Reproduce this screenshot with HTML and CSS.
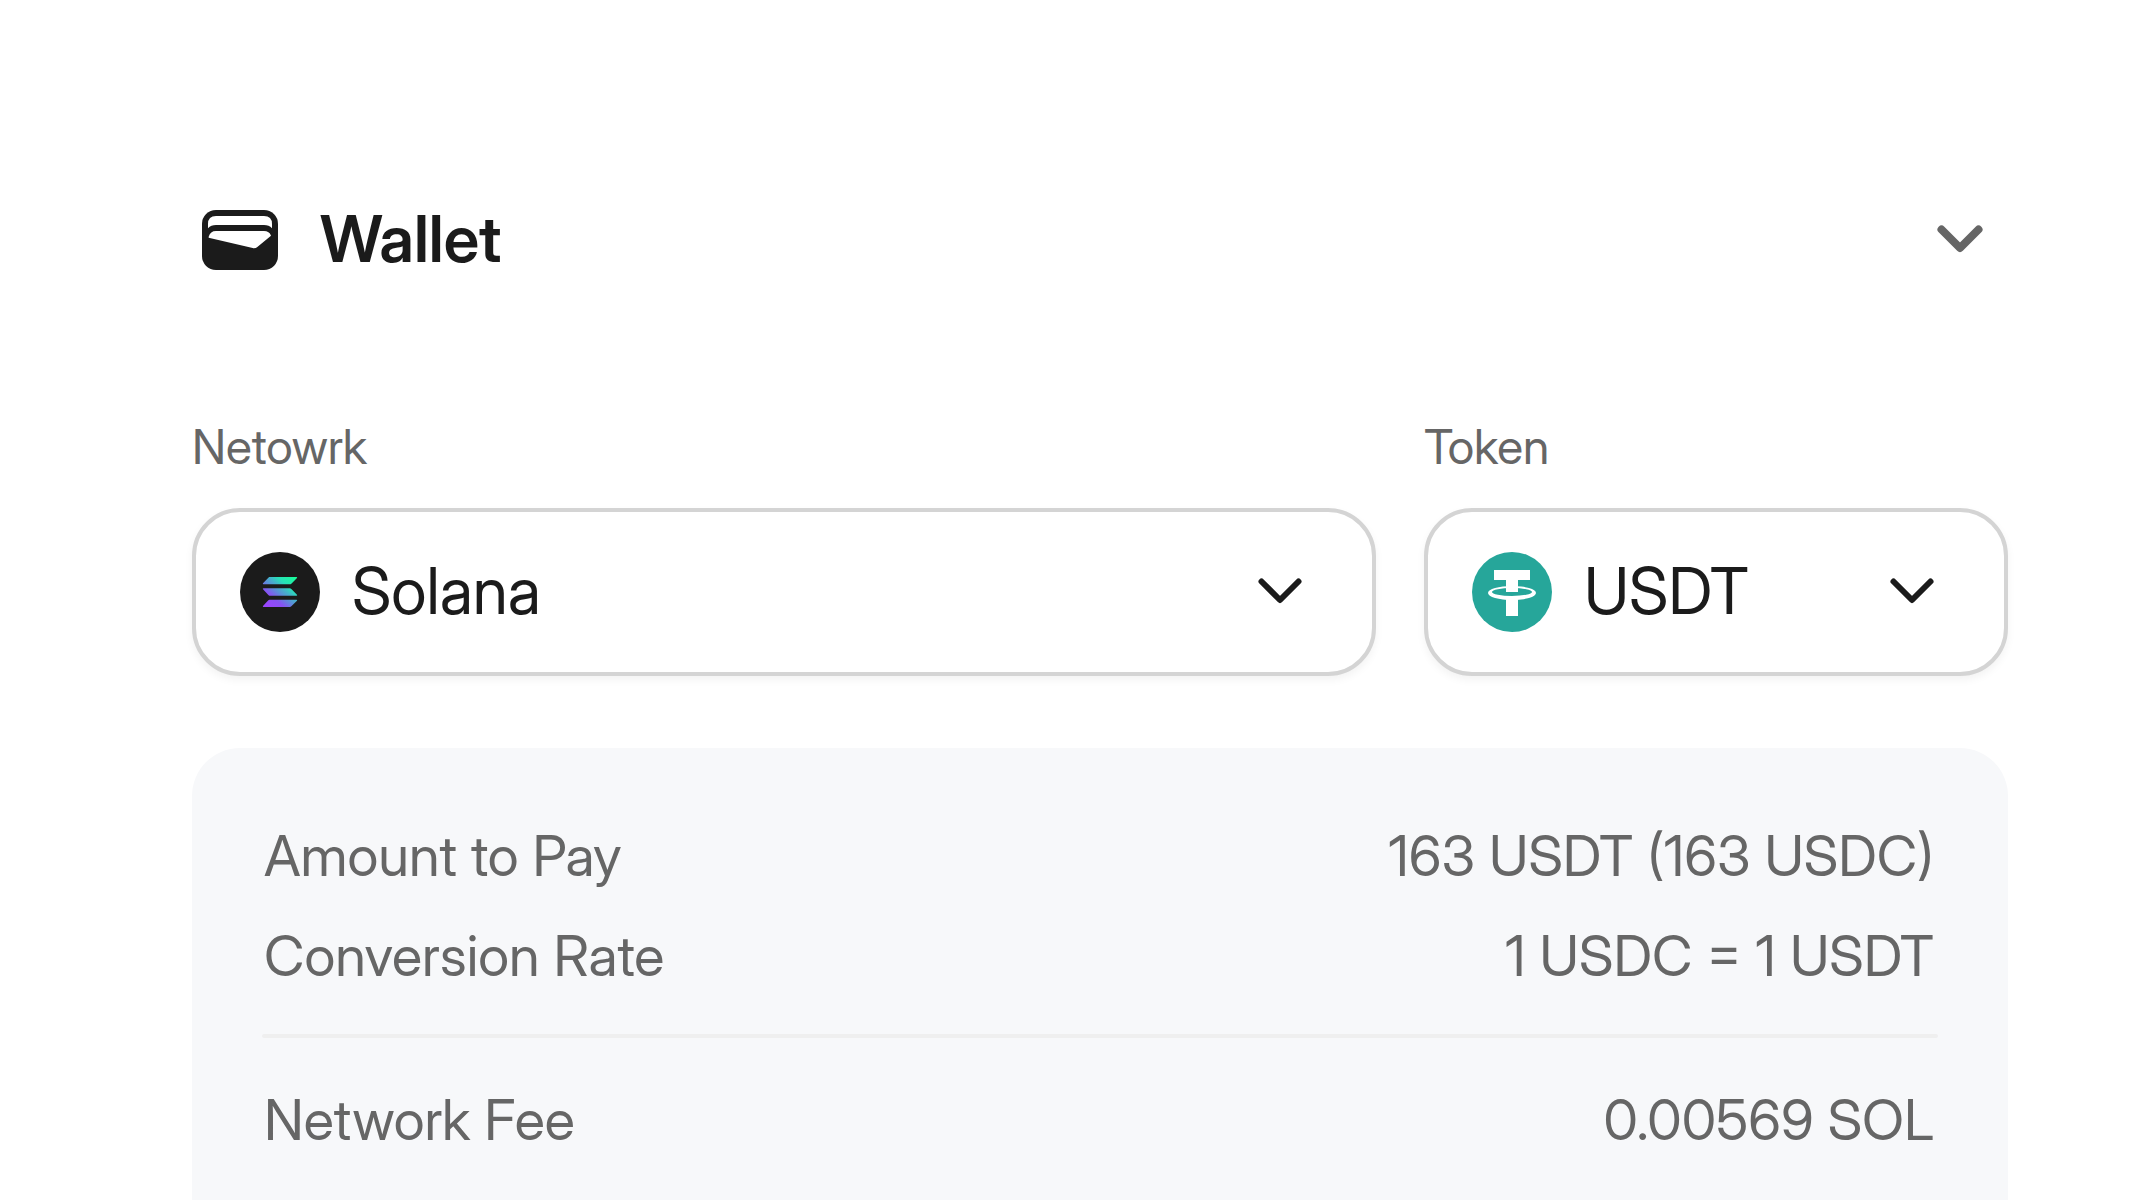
FILE: index.html
```html
<!DOCTYPE html>
<html lang="en">
<head>
<meta charset="utf-8">
<meta name="viewport" content="width=device-width, initial-scale=1">
<title>Wallet</title>
<link rel="stylesheet" href="styles.css">
</head>
<body>
<main class="wallet">
  <button class="wallet-header" type="button" aria-expanded="true">
    <span class="icon-box">
      <svg class="wallet-icon" viewBox="0 0 228 180" aria-hidden="true">
        <rect width="228" height="180" rx="42" fill="#1b1b1b"/>
        <path d="M18 55V42Q18 18 42 18H186Q210 18 210 42V55Q201 45 186 45H42Q27 45 18 55Z" fill="#fff"/>
        <path d="M20 80Q25 63 42 63H186Q202 63 207 77L166 111Q160 116 152 114L20 83Z" fill="#fff"/>
      </svg>
    </span>
    <span class="wallet-title">Wallet</span>
    <span class="icon-box">
      <svg class="chevron chevron-muted" viewBox="0 0 48 48" aria-hidden="true"><path d="M5.5 13.5L24 32L42.5 13.5"/></svg>
    </span>
  </button>

  <form class="fields">
    <div class="field">
      <label class="field-label" for="network">Netowrk</label>
      <div class="select-box">
        <svg class="coin" viewBox="0 0 240 240" aria-hidden="true">
          <defs>
            <linearGradient id="sol" gradientUnits="userSpaceOnUse" x1="78" y1="170" x2="162" y2="70">
              <stop offset="0.08" stop-color="#9945ff"/>
              <stop offset="0.3" stop-color="#8752f3"/>
              <stop offset="0.5" stop-color="#5497d5"/>
              <stop offset="0.6" stop-color="#43b4ca"/>
              <stop offset="0.72" stop-color="#28e0b9"/>
              <stop offset="0.97" stop-color="#19fb9b"/>
            </linearGradient>
          </defs>
          <circle cx="120" cy="120" r="120" fill="#1b1b1b"/>
          <path fill="url(#sol)" d="M88 75H169Q173 75 171 78L154 95Q152 97 149 97H71Q67 97 69 94L85 77Q87 75 88 75ZM71 109H149Q152 109 154 111L171 128Q173 131 169 131H88Q87 131 85 129L69 112Q67 109 71 109ZM88 143H169Q173 143 171 146L154 163Q152 165 149 165H71Q67 165 69 162L85 145Q87 143 88 143Z"/>
        </svg>
        <select class="select" id="network" name="network"><option>Solana</option></select>
        <svg class="chevron" viewBox="0 0 48 48" aria-hidden="true"><path d="M5.5 13.5L24 32L42.5 13.5"/></svg>
      </div>
    </div>
    <div class="field">
      <label class="field-label" for="token">Token</label>
      <div class="select-box">
        <svg class="coin" viewBox="0 0 240 240" aria-hidden="true">
          <circle cx="120" cy="120" r="120" fill="#26a69a"/>
          <path fill="#fff" fill-rule="evenodd" d="M48 123A72 21 0 1 0 192 123A72 21 0 1 0 48 123ZM60 120A60 12 0 1 0 180 120A60 12 0 1 0 60 120Z"/>
          <path fill="#fff" d="M66 54H174V84H138V120H102V84H66ZM102 142H138V192H102Z"/>
        </svg>
        <select class="select" id="token" name="token"><option>USDT</option></select>
        <svg class="chevron" viewBox="0 0 48 48" aria-hidden="true"><path d="M5.5 13.5L24 32L42.5 13.5"/></svg>
      </div>
    </div>
  </form>

  <section class="summary">
    <dl class="rows">
      <div class="row"><dt>Amount to Pay</dt><dd>163 USDT (163 USDC)</dd></div>
      <div class="row"><dt>Conversion Rate</dt><dd>1 USDC = 1 USDT</dd></div>
    </dl>
    <hr class="divider">
    <dl class="rows">
      <div class="row"><dt>Network Fee</dt><dd>0.00569 SOL</dd></div>
    </dl>
  </section>
</main>
</body>
</html>
```
FILE: styles.css
```css
* { box-sizing: border-box; }

body {
  margin: 0;
  background: #fff;
  color: #1b1b1b;
  font-family: "Inter Display", Inter, "Liberation Sans", sans-serif;
  font-variation-settings: "opsz" 32;
}

.wallet {
  display: flex;
  flex-direction: column;
  min-height: 100vh;
  padding: 192px 124px 0 192px;
}

.wallet-header {
  display: flex;
  align-items: center;
  gap: 32px;
  margin: 0 0 128px;
  padding: 0;
  border: 0;
  background: none;
  color: inherit;
  font: inherit;
  font-variation-settings: inherit;
  text-align: left;
  cursor: pointer;
}

.icon-box {
  display: grid;
  place-items: center;
  width: 96px;
  height: 96px;
}

.wallet-icon { width: 76px; height: 60px; }

.wallet-title {
  flex: 1;
  padding-bottom: 2px;
  font-size: 64px;
  font-weight: 600;
  line-height: 80px;
}

.chevron {
  width: 48px;
  height: 48px;
  fill: none;
  stroke: #1b1b1b;
  stroke-width: 6;
  stroke-linecap: round;
  stroke-linejoin: round;
}

.chevron-muted { stroke: #666; stroke-width: 8; }

.fields {
  display: grid;
  grid-template-columns: minmax(0, 1fr) 584px;
  gap: 48px;
  margin: 0 0 72px;
}

.field {
  display: flex;
  flex-direction: column;
  gap: 30px;
}

.field-label {
  color: #666;
  font-size: 48px;
  line-height: 62px;
}

.select-box {
  display: grid;
  align-items: center;
  height: 168px;
}

.select-box > * { grid-area: 1 / 1; }

.select {
  width: 100%;
  height: 100%;
  padding: 0 144px 2px 156px;
  border: 4px solid #d4d4d4;
  border-radius: 48px;
  background: #fff;
  box-shadow: 0 4px 8px rgba(0, 0, 0, 0.05);
  color: #1b1b1b;
  font-family: inherit;
  font-variation-settings: inherit;
  font-size: 64px;
  line-height: 80px;
  appearance: none;
}

.select-box .coin,
.select-box .chevron {
  z-index: 1;
  pointer-events: none;
}

.coin {
  width: 80px;
  height: 80px;
  margin-left: 48px;
}

.select-box .chevron {
  justify-self: end;
  margin-right: 72px;
}

.summary {
  flex: 1;
  padding: 72px 74px 44px 72px;
  border-radius: 48px 48px 0 0;
  background: #f7f8fa;
  color: #666;
  font-size: 56px;
  line-height: 72px;
}

.rows {
  display: flex;
  flex-direction: column;
  gap: 28px;
  margin: 0;
}

.row {
  display: flex;
  justify-content: space-between;
}

.row dd { margin: 0; }

.divider {
  height: 4px;
  margin: 42px -4px 46px -2px;
  border: 0;
  border-radius: 2px;
  background: #efefef;
}
```
